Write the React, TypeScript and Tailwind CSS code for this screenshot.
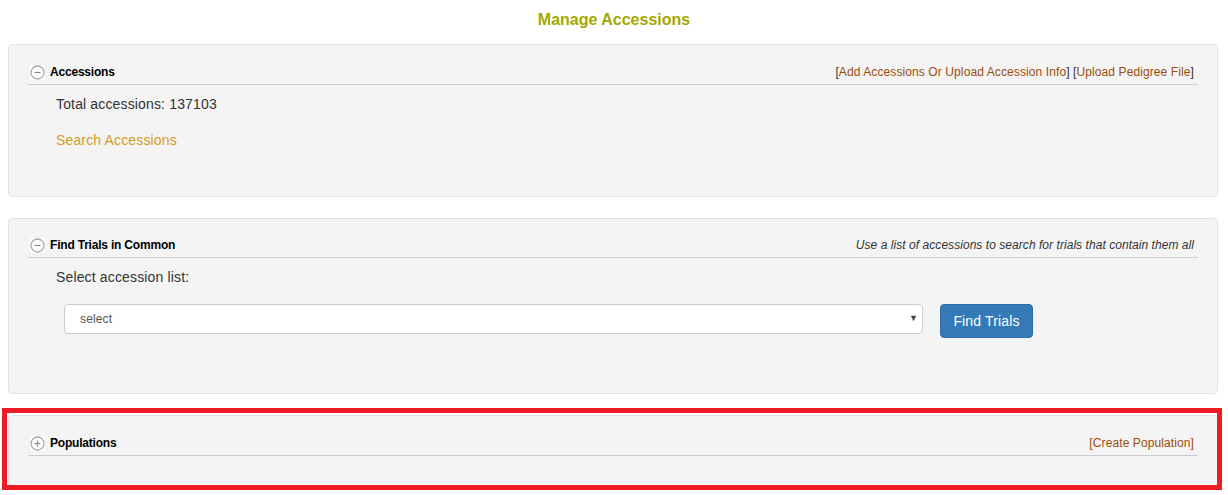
import React from "react";

function ToggleIcon({ open }: { open: boolean }) {
  return (
    <svg width="15" height="15" viewBox="0 0 15 15" className="mr-[5px] shrink-0 bg-white">
      <circle cx="7.5" cy="7.5" r="6.5" fill="none" stroke="#a8a8a8" strokeWidth="1.3" />
      <line x1="4.5" y1="7.5" x2="10.5" y2="7.5" stroke="#8a8a8a" strokeWidth="1.2" />
      {!open && <line x1="7.5" y1="4.5" x2="7.5" y2="10.5" stroke="#8a8a8a" strokeWidth="1.2" />}
    </svg>
  );
}

function PanelHeader({
  title,
  open,
  children,
}: {
  title: string;
  open: boolean;
  children?: React.ReactNode;
}) {
  return (
    <div className="flex items-center justify-between border-b border-[#cccccc] pb-[3px]">
      <div className="flex h-[18px] items-center pl-[2px]">
        <ToggleIcon open={open} />
        <span className="text-[12px] font-bold tracking-[-0.2px] text-black">{title}</span>
      </div>
      <div className="pr-[4px] text-[12px] tracking-[0.1px] text-[#333]">{children}</div>
    </div>
  );
}

export default function App() {
  return (
    <div className="min-h-screen bg-white pb-[6px] text-[14px] tracking-[0.15px] text-[#333]" style={{ fontFamily: '"Liberation Sans", Arial, sans-serif' }}>
      <h1 className="flex h-[40px] items-center justify-center text-[16px] font-bold tracking-normal text-[#a4a800]">
        Manage Accessions
      </h1>

      <div className="ml-[8px] mt-[4px] w-[1210px] space-y-[21px]">
        {/* Accessions */}
        <div className="h-[153px] rounded border border-[#e3e3e3] bg-[#f4f4f4] px-[19px] pt-[18px]">
          <PanelHeader title="Accessions" open>
            [<a className="text-[#9a4d0c]">Add Accessions Or Upload Accession Info</a>] [
            <a className="text-[#9a4d0c]">Upload Pedigree File</a>]
          </PanelHeader>
          <div className="ml-[28px] mt-[9px] leading-[20px]">Total accessions: 137103</div>
          <div className="ml-[28px] mt-[16px] leading-[20px] text-[#d69a1c]">Search Accessions</div>
        </div>

        {/* Find Trials in Common */}
        <div className="h-[176px] rounded border border-[#e3e3e3] bg-[#f4f4f4] px-[19px] pt-[17px]">
          <PanelHeader title="Find Trials in Common" open>
            <span className="italic tracking-[0.05px]">Use a list of accessions to search for trials that contain them all</span>
          </PanelHeader>
          <div className="ml-[28px] mt-[9px] leading-[20px]">Select accession list:</div>
          <div className="ml-[36px] mt-[17px] flex items-start gap-[17px]">
            <div className="flex h-[30px] w-[859px] items-center justify-between rounded border border-[#cccccc] bg-white pl-[15px] pr-[4px] text-[12px] text-[#555]">
              <span>select</span>
              <span className="text-[9px] text-[#444]">▼</span>
            </div>
            <button className="h-[34px] w-[93px] rounded border border-[#2e6da4] bg-[#337ab7] text-[14px] text-white">
              Find Trials
            </button>
          </div>
        </div>

        {/* Populations */}
        <div className="relative">
          <div className="h-[71px] rounded border border-[#e3e3e3] bg-[#f4f4f4] px-[19px] pt-[18px]">
            <PanelHeader title="Populations" open={false}>
              <a className="text-[#9a4d0c]">[Create Population]</a>
            </PanelHeader>
          </div>
          <div className="pointer-events-none absolute -left-[6px] -right-[4px] -top-[7px] -bottom-[4px] border-[5px] border-[#ec1c24]" />
        </div>
      </div>
    </div>
  );
}
